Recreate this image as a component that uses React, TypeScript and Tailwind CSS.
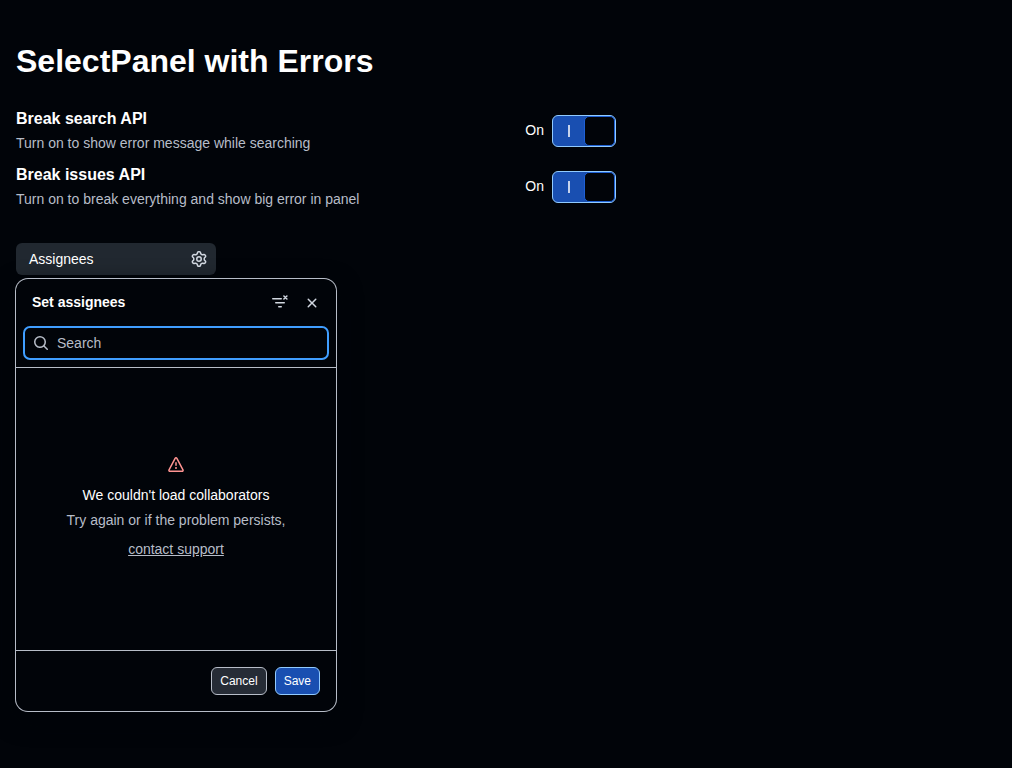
import { useState } from 'react'
import type { ReactNode } from 'react'

const icons = {
  gear: 'M8 0a8.2 8.2 0 0 1 .701.031C9.444.095 9.99.645 10.16 1.29l.288 1.107c.018.066.079.158.212.224.231.114.454.243.668.386.123.082.233.09.299.071l1.103-.303c.644-.176 1.392.021 1.82.63.27.385.506.792.704 1.218.315.675.111 1.422-.364 1.891l-.814.806c-.049.048-.098.147-.088.294.016.257.016.515 0 .772-.01.147.038.246.088.294l.814.806c.475.469.679 1.216.364 1.891a7.977 7.977 0 0 1-.704 1.217c-.428.61-1.176.807-1.82.63l-1.102-.302c-.067-.019-.177-.011-.3.071a5.909 5.909 0 0 1-.668.386c-.133.066-.194.158-.211.224l-.29 1.106c-.168.646-.715 1.196-1.458 1.26a8.006 8.006 0 0 1-1.402 0c-.743-.064-1.289-.614-1.458-1.26l-.289-1.106c-.018-.066-.079-.158-.212-.224a5.738 5.738 0 0 1-.668-.386c-.123-.082-.233-.09-.299-.071l-1.103.303c-.644.176-1.392-.021-1.82-.63a8.12 8.12 0 0 1-.704-1.218c-.315-.675-.111-1.422.363-1.891l.815-.806c.05-.048.098-.147.088-.294a6.214 6.214 0 0 1 0-.772c.01-.147-.038-.246-.088-.294l-.815-.806C.635 6.045.431 5.298.746 4.623a7.92 7.92 0 0 1 .704-1.217c.428-.61 1.176-.807 1.82-.63l1.102.302c.067.019.177.011.3-.071.214-.143.437-.272.668-.386.133-.066.194-.158.211-.224l.29-1.106C6.009.645 6.556.095 7.299.03 7.53.01 7.764 0 8 0Zm-.571 1.525c-.036.003-.108.036-.137.146l-.289 1.105c-.147.561-.549.967-.998 1.189-.173.086-.34.183-.5.29-.417.278-.97.423-1.529.27l-1.103-.303c-.109-.03-.175.016-.195.045-.22.312-.412.644-.573.99-.014.031-.021.11.059.19l.815.806c.411.406.562.957.53 1.456a4.709 4.709 0 0 0 0 .582c.032.499-.119 1.05-.53 1.456l-.815.806c-.081.08-.073.159-.059.19.162.346.353.677.573.989.02.03.085.076.195.046l1.102-.303c.56-.153 1.113-.008 1.53.27.161.107.328.204.501.29.447.222.85.629.997 1.189l.289 1.105c.029.109.101.143.137.146a6.6 6.6 0 0 0 1.142 0c.036-.003.108-.036.137-.146l.289-1.105c.147-.561.549-.967.998-1.189.173-.086.34-.183.5-.29.417-.278.97-.423 1.529-.27l1.103.303c.109.029.175-.016.195-.045.22-.313.411-.644.573-.99.014-.031.021-.11-.059-.19l-.815-.806c-.411-.406-.562-.957-.53-1.456a4.709 4.709 0 0 0 0-.582c-.032-.499.119-1.05.53-1.456l.815-.806c.081-.08.073-.159.059-.19a6.464 6.464 0 0 0-.573-.989c-.02-.03-.085-.076-.195-.046l-1.102.303c-.56.153-1.113.008-1.53-.27a4.44 4.44 0 0 0-.501-.29c-.447-.222-.85-.629-.997-1.189l-.289-1.105c-.029-.11-.101-.143-.137-.146a6.6 6.6 0 0 0-1.142 0ZM11 8a3 3 0 1 1-6 0 3 3 0 0 1 6 0ZM9.5 8a1.5 1.5 0 1 0-3.001.001A1.5 1.5 0 0 0 9.5 8Z',
  alert: 'M6.457 1.047c.659-1.234 2.427-1.234 3.086 0l6.082 11.378A1.75 1.75 0 0 1 14.082 15H1.918a1.75 1.75 0 0 1-1.543-2.575Zm1.763.707a.25.25 0 0 0-.44 0L1.698 13.132a.25.25 0 0 0 .22.368h12.164a.25.25 0 0 0 .22-.368Zm.53 3.996v2.5a.75.75 0 0 1-1.5 0v-2.5a.75.75 0 0 1 1.5 0ZM9 11a1 1 0 1 1-2 0 1 1 0 0 1 2 0Z',
  search: 'M10.68 11.74a6 6 0 0 1-7.922-8.982 6 6 0 0 1 8.982 7.922l3.04 3.04a.749.749 0 0 1-.326 1.275.749.749 0 0 1-.734-.215ZM11.5 7a4.499 4.499 0 1 0-8.997 0A4.499 4.499 0 0 0 11.5 7Z',
  x: 'M3.72 3.72a.75.75 0 0 1 1.06 0L8 6.94l3.22-3.22a.749.749 0 0 1 1.275.326.749.749 0 0 1-.215.734L9.06 8l3.22 3.22a.749.749 0 0 1-.326 1.275.749.749 0 0 1-.734-.215L8 9.06l-3.22 3.22a.751.751 0 0 1-1.042-.018.751.751 0 0 1-.018-1.042L6.94 8 3.72 4.78a.75.75 0 0 1 0-1.06Z',
}

function Icon({ name, className = '' }: { name: keyof typeof icons; className?: string }) {
  return (
    <svg viewBox="0 0 16 16" fill="currentColor" aria-hidden="true" className={`size-4 shrink-0 ${className}`}>
      <path d={icons[name]} />
    </svg>
  )
}

function FilterRemoveIcon() {
  return (
    <svg viewBox="0 0 16 16" fill="none" stroke="currentColor" strokeLinecap="round" aria-hidden="true" className="size-4">
      <path d="M.75 3.75h8.5M3.75 7.75h8.5M6.75 11.75h2.5" strokeWidth="1.5" />
      <path d="m11.9 1 3 3m0-3-3 3" strokeWidth="1.5" />
    </svg>
  )
}

function ToggleRow({ id, title, caption }: { id: string; title: string; caption: string }) {
  const [on, setOn] = useState(true)
  return (
    <div className="flex min-h-12 items-center justify-between">
      <div className="self-start">
        <h2 id={id} className="text-base leading-6 font-bold">{title}</h2>
        <p className="pt-0.5 text-sm leading-5 text-[#b7bdc8]">{caption}</p>
      </div>
      <div className="flex items-center gap-2">
        <span className="pb-0.5 text-sm leading-5">{on ? 'On' : 'Off'}</span>
        <button
          type="button"
          role="switch"
          aria-checked={on}
          aria-labelledby={id}
          onClick={() => setOn(!on)}
          className={`flex h-8 w-16 items-center rounded-md border ${on ? 'border-[#91cbff] bg-[#194fb1]' : 'flex-row-reverse border-[#b7bdc8] bg-[#262c36]'}`}
        >
          <span className="flex flex-1 justify-center">
            <span className="h-3 w-0.5 bg-[#c6d3ec]" />
          </span>
          <span className="h-[30px] w-[31px] rounded-[5px] border border-[#1e60d5] bg-[#010409]" />
        </button>
      </div>
    </div>
  )
}

function IconButton({ label, children }: { label: string; children: ReactNode }) {
  return (
    <button type="button" aria-label={label} className="flex size-8 items-center justify-center rounded-md text-[#d1d7e0]">
      {children}
    </button>
  )
}

export default function App() {
  const [query, setQuery] = useState('')
  return (
    <main className="min-h-screen bg-[#010409] px-4 pt-[37px] pb-14 font-['Liberation_Sans',Arial,sans-serif] text-white">
      <h1 className="text-[32px] leading-12 font-bold">SelectPanel with Errors</h1>

      <div className="mt-[22px] flex max-w-[600px] flex-col gap-2">
        <ToggleRow id="break-search" title="Break search API" caption="Turn on to show error message while searching" />
        <ToggleRow id="break-issues" title="Break issues API" caption="Turn on to break everything and show big error in panel" />
      </div>

      <button type="button" className="mt-8 flex h-8 w-50 items-center justify-between rounded-md bg-[#212830] pr-[9px] pl-[13px] text-sm">
        Assignees
        <Icon name="gear" className="text-[#d1d7e0]" />
      </button>

      <section
        role="dialog"
        aria-labelledby="panel-title"
        className="mt-1 flex w-80 flex-col rounded-xl bg-[#010409] shadow-[0_0_0_1px_#b7bdc8,0_8px_24px_#010409]"
      >
        <header className="flex flex-col gap-2 border-b border-[#b7bdc8] p-2">
          <div className="flex h-8 items-center">
            <h2 id="panel-title" className="flex-1 pb-0.5 pl-2 text-sm leading-5 font-bold">Set assignees</h2>
            <IconButton label="Clear selection"><FilterRemoveIcon /></IconButton>
            <IconButton label="Close"><Icon name="x" /></IconButton>
          </div>
          <label className="flex h-8 items-center gap-2 rounded-md pl-[9px] text-[#b7bdc8] outline-2 -outline-offset-1 outline-[#409eff]">
            <Icon name="search" />
            <input
              type="text"
              aria-label="Search"
              placeholder="Search"
              value={query}
              onChange={(e) => setQuery(e.target.value)}
              className="min-w-0 flex-1 bg-transparent text-sm leading-5 text-white outline-none placeholder:text-[#b7bdc8]"
            />
          </label>
        </header>

        <div className="flex min-h-[282px] flex-col items-center justify-center px-10 pt-[3px] text-center text-sm">
          <Icon name="alert" className="text-[#ff9492]" />
          <p className="mt-[11px] leading-[22px]">We couldn&apos;t load collaborators</p>
          <p className="leading-[29px] text-[#b7bdc8]">
            Try again or if the problem persists, <a href="#support" className="underline">contact support</a>
          </p>
        </div>

        <footer className="flex justify-end gap-2 border-t border-[#b7bdc8] p-4 text-xs">
          <button type="button" className="h-7 rounded-md border border-[#b7bdc8] bg-[#262c36] px-2">Cancel</button>
          <button type="button" className="h-7 rounded-md border border-[#91cbff] bg-[#194fb1] px-2">Save</button>
        </footer>
      </section>
    </main>
  )
}
